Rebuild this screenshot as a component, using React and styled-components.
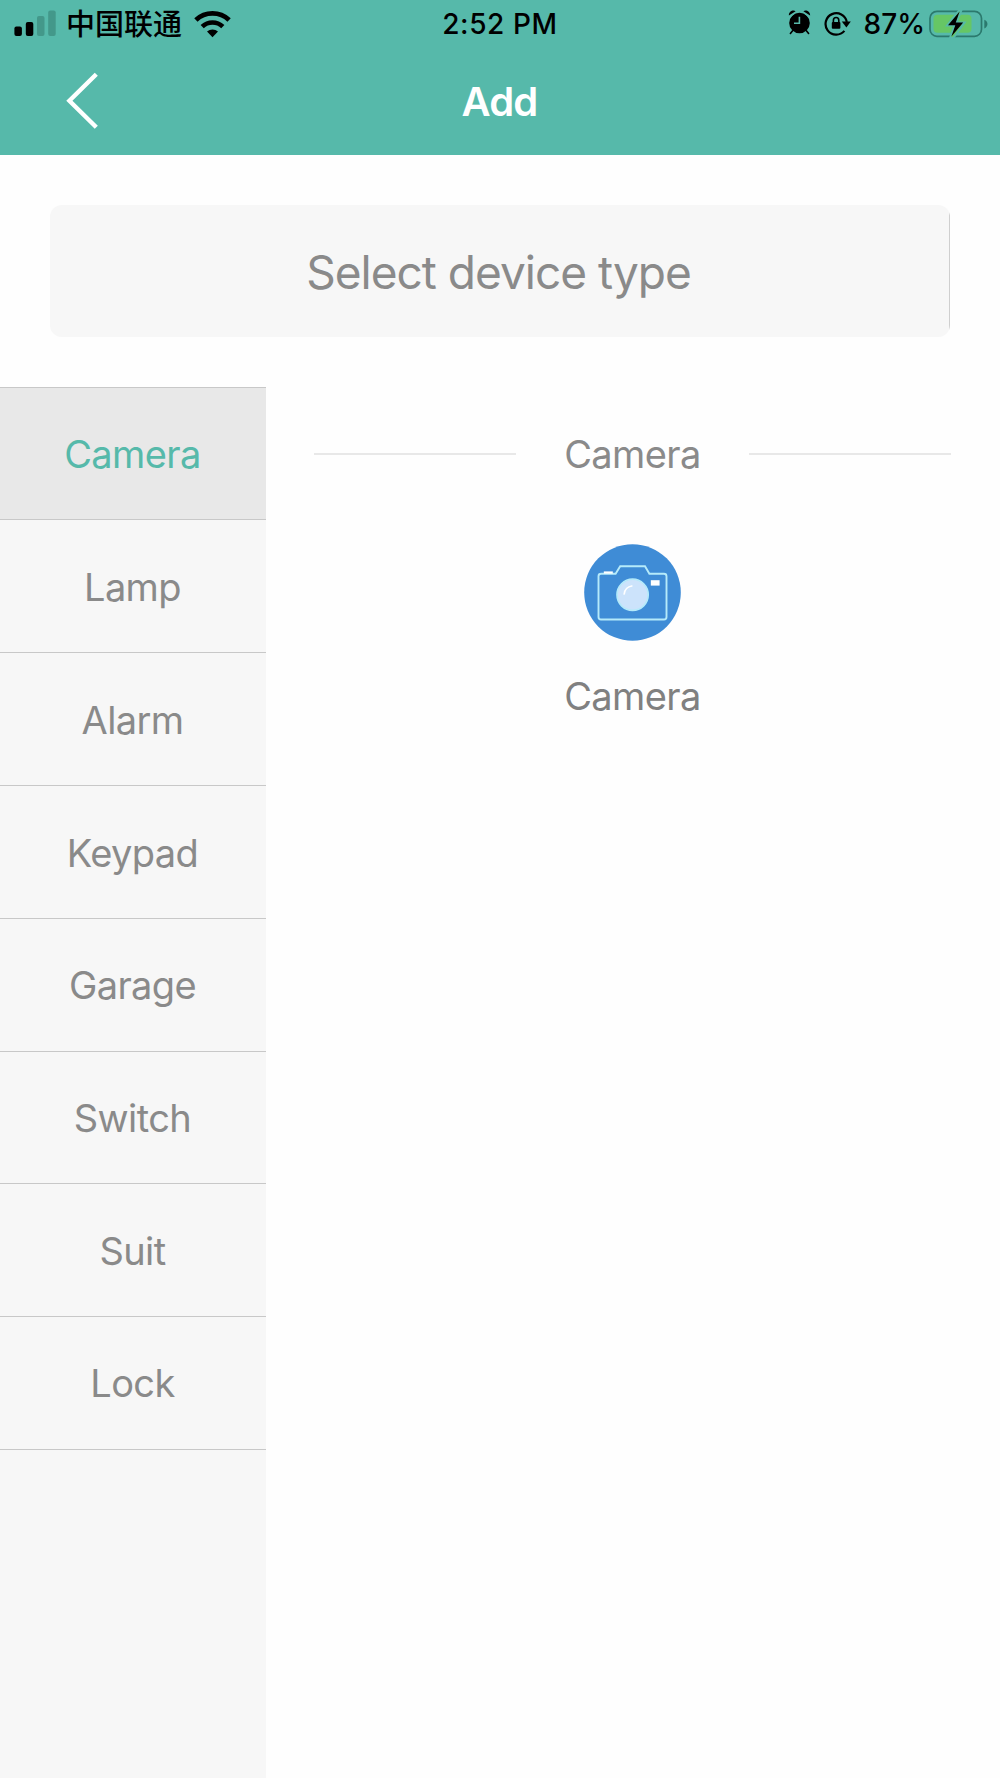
import { useState } from 'react';
import styled, { createGlobalStyle } from 'styled-components';

const deviceTypes = ['Camera', 'Lamp', 'Alarm', 'Keypad', 'Garage', 'Switch', 'Suit', 'Lock'];

const SignalIcon = () => (
  <svg width="42" height="27" viewBox="0 0 42 27">
    <rect x="0.4" y="16.5" width="7.5" height="9.5" rx="2" fill="#000" />
    <rect x="11.8" y="12" width="7.5" height="14" rx="2" fill="#000" />
    <rect x="23" y="6" width="7.5" height="20" rx="2" fill="#43988a" />
    <rect x="34.2" y="0.5" width="7.5" height="25.5" rx="2" fill="#43988a" />
  </svg>
);

const WifiIcon = () => (
  <svg width="37" height="28" viewBox="0 0 37 28" fill="none" stroke="#000">
    <path d="M1.9 9.9a24.2 24.2 0 0 1 33.2 0" strokeWidth="4.8" />
    <path d="M8.2 16.6a15 15 0 0 1 20.6 0" strokeWidth="4.6" />
    <path d="M13 21.4a8.6 8.6 0 0 1 11 0l-5.5 5.8z" fill="#000" stroke="none" />
  </svg>
);

const AlarmIcon = () => (
  <svg width="23" height="25" viewBox="0 0 23 25">
    <circle cx="11.5" cy="13" r="10.3" fill="#000" />
    <path d="M0.9 5.4C0.6 2 4.6-0.6 7.6 1.2zM22.1 5.4C22.4 2 18.4-0.6 15.4 1.2z" fill="#000" />
    <path d="M4.6 20.8l-2.2 2.7M18.4 20.8l2.2 2.7" stroke="#000" strokeWidth="1.6" strokeLinecap="round" />
    <path d="M2 7.2L9 1.4M21 7.2L14 1.4" stroke="#56b9aa" strokeWidth="1" />
    <path d="M11.4 6.8v6.4H6" stroke="#56b9aa" strokeWidth="1.6" fill="none" />
  </svg>
);

const RotationLockIcon = () => (
  <svg width="27" height="25" viewBox="0 0 27 25" fill="none">
    <path d="M20.4 19.9A10.7 10.7 0 1 1 22.8 11" stroke="#000" strokeWidth="2.2" />
    <path d="M17.8 10.4h9l-4.4 6z" fill="#000" />
    <rect x="7.8" y="11" width="8.6" height="6.8" rx="1" fill="#000" />
    <path d="M9.4 11.5V9.2a2.7 2.7 0 0 1 5.4 0v2.3" stroke="#000" strokeWidth="1.6" />
  </svg>
);

const BatteryIcon = () => (
  <svg width="59" height="28" viewBox="0 0 59 28">
    <rect x="1" y="1.3" width="51.5" height="25" rx="7" fill="none" stroke="#2b796d" strokeWidth="1.7" />
    <rect x="4.5" y="4.8" width="38" height="18" rx="4" fill="#66c665" />
    <path d="M55.3 9.8c4.2 1.2 4.2 7.4 0 8.6z" fill="#2b796d" />
    <path
      d="M30.5-0.2L18 15.6h7.4L21 28h3.4L35.6 12.4h-8L32.6-0.2z"
      fill="#66c665"
      stroke="#56b9aa"
      strokeWidth="2"
    />
    <path d="M30.6 1.6L19 15.2h7.3L22.4 26.6 34.2 12.4h-7.4z" fill="#000" />
  </svg>
);

const BackIcon = () => (
  <svg width="34" height="58" viewBox="0 0 34 58" fill="none">
    <path d="M32.3 2.2L5.4 28.8l26.9 26.5" stroke="#fff" strokeWidth="4.4" />
  </svg>
);

const CameraIcon = () => (
  <svg width="97" height="97" viewBox="0 0 97 97" fill="none">
    <circle cx="48.5" cy="48.5" r="48.3" fill="#3f8cd6" />
    <path
      d="M16.5 29.8H31.6L36.2 22.2H61L65.4 29.8H80a2.5 2.5 0 0 1 2.5 2.5V73a2.5 2.5 0 0 1-2.5 2.5H17a2.5 2.5 0 0 1-2.5-2.5V32.3a2.5 2.5 0 0 1 2.5-2.5z"
      stroke="#b5eafa"
      strokeWidth="1.9"
    />
    <path d="M19.8 27.4h9v2.2h-9z" fill="#fff" />
    <path d="M66.8 36.2h8.8v5.4h-8.8z" fill="#fff" />
    <circle cx="48.6" cy="50.8" r="15.6" fill="#cce3fb" stroke="#b5eafa" strokeWidth="1.7" />
    <path d="M40.2 50a9 9 0 0 1 7.6-8" stroke="#fff" strokeWidth="1.7" strokeLinecap="round" />
  </svg>
);

const App = () => {
  const [selected, setSelected] = useState('Camera');

  return (
    <Root>
      <GlobalStyle />
      <Header>
        <StatusBar>
          <StatusLeft>
            <SignalIcon />
            <Carrier>中国联通</Carrier>
            <WifiIcon />
          </StatusLeft>
          <Time>2:52 PM</Time>
          <StatusRight>
            <AlarmIcon />
            <RotationLockIcon />
            <Percent>87%</Percent>
            <BatteryIcon />
          </StatusRight>
        </StatusBar>
        <NavBar>
          <BackButton aria-label="Back">
            <BackIcon />
          </BackButton>
          <Title>Add</Title>
        </NavBar>
      </Header>
      <SelectArea>
        <SelectBox>Select device type</SelectBox>
      </SelectArea>
      <Content>
        <Sidebar>
          {deviceTypes.map(type => (
            <MenuItem key={type} $active={type === selected} onClick={() => setSelected(type)}>
              {type}
            </MenuItem>
          ))}
        </Sidebar>
        <Panel>
          <SectionHead>
            <Line />
            <Label>{selected}</Label>
            <Line />
          </SectionHead>
          <Device>
            <CameraIcon />
            <Label $dark>Camera</Label>
          </Device>
        </Panel>
      </Content>
    </Root>
  );
};

export default App;

const GlobalStyle = createGlobalStyle`
  * {
    box-sizing: border-box;
  }
  body {
    margin: 0;
    background: #fff;
  }
  svg {
    display: block;
    flex: none;
  }
`;

const Root = styled.div`
  width: 1000px;
  height: 1778px;
  display: flex;
  flex-direction: column;
  overflow: hidden;
  background: #fefefe;
  font-family: Inter, 'Noto Sans CJK SC', sans-serif;
`;

const Header = styled.header`
  height: 155px;
  flex: none;
  background: #56b9aa;
`;

const StatusBar = styled.div`
  height: 47px;
  display: grid;
  grid-template-columns: 1fr auto 1fr;
  align-items: center;
  color: #000;
`;

const StatusLeft = styled.div`
  display: flex;
  align-items: center;
  padding-left: 14px;
`;

const StatusRight = styled.div`
  display: flex;
  align-items: center;
  justify-content: flex-end;
  padding-right: 12px;

  svg:nth-child(1) {
    margin-bottom: 2px;
  }
  svg:nth-child(2) {
    margin-left: 13px;
  }
`;

const Carrier = styled.span`
  margin: 0 12px 3px 10px;
  font-family: 'Noto Sans CJK SC', sans-serif;
  font-size: 29px;
  font-weight: 500;
  line-height: 40px;
`;

const Time = styled.span`
  padding-top: 1px;
  font-size: 28px;
  font-weight: 500;
  letter-spacing: 0.6px;
`;

const Percent = styled.span`
  margin: 0 4px 0 13px;
  padding-top: 1px;
  font-size: 28px;
  font-weight: 500;
`;

const NavBar = styled.div`
  height: 107px;
  display: grid;
  grid-template-columns: 1fr auto 1fr;
  align-items: center;
`;

const BackButton = styled.button`
  justify-self: start;
  padding: 0;
  margin-left: 64px;
  border: none;
  background: none;
`;

const Title = styled.h1`
  margin: 0;
  padding: 1px 1px 0 0;
  font-size: 40px;
  font-weight: 600;
  letter-spacing: -0.8px;
  color: #fff;
`;

const SelectArea = styled.div`
  flex: none;
  padding: 50px;
`;

const SelectBox = styled.div`
  height: 132px;
  display: flex;
  align-items: center;
  justify-content: center;
  padding: 1px 3px 0 0;
  border-radius: 12px;
  background: linear-gradient(#cfcfcf, #cfcfcf) right / 1px 100% no-repeat #f7f7f7;
  color: #8a8a8a;
  font-size: 46px;
  letter-spacing: -1px;
`;

const Content = styled.div`
  flex: 1;
  display: flex;
`;

const Sidebar = styled.nav`
  width: 266px;
  flex: none;
  margin-top: -0.4px;
  background: #f7f7f7;
`;

const MenuItem = styled.div`
  height: 132.8px;
  display: flex;
  align-items: center;
  justify-content: center;
  padding: 1.5px 1px 0 0;
  border-top: 1px solid #c8c8c8;
  background: ${({ $active }) => ($active ? '#e8e8e8' : '#f7f7f7')};
  color: ${({ $active }) => ($active ? '#56b9aa' : '#8a8a8a')};
  font-size: 38px;
  letter-spacing: -0.6px;

  &:last-child {
    height: 133.8px;
    padding-bottom: 1px;
    border-bottom: 1px solid #c8c8c8;
  }
`;

const Panel = styled.main`
  flex: 1;
  display: flex;
  flex-direction: column;
`;

const SectionHead = styled.div`
  height: 133px;
  display: flex;
  align-items: center;
  justify-content: space-between;
  padding: 0 49px 0 48px;
`;

const Line = styled.div`
  width: 202px;
  height: 2px;
  background: #e8e8e8;
`;

const Label = styled.span`
  color: ${({ $dark }) => ($dark ? '#808080' : '#8a8a8a')};
  font-size: 38px;
  line-height: 46px;
  letter-spacing: -0.6px;
`;

const Device = styled.div`
  display: flex;
  flex-direction: column;
  align-items: center;
  gap: 32px;
  padding: 24px 1px 0 0;
`;
